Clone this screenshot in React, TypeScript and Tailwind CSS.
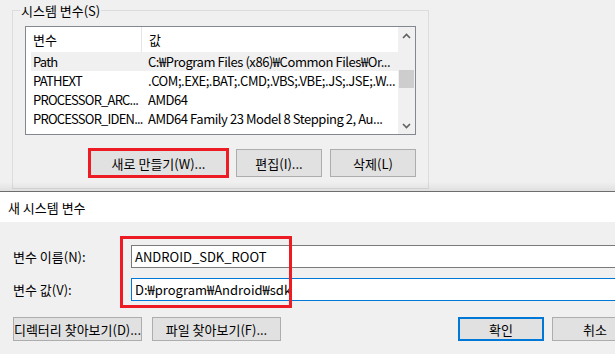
import React from "react";

const FONT = {
  fontFamily: '"Noto Sans CJK KR", "Noto Sans", sans-serif',
};

function ChevronUp() {
  return (
    <svg width="9" height="6" viewBox="0 0 9 6">
      <path d="M1 5 L4.5 1.5 L8 5" fill="none" stroke="#606060" strokeWidth="1.6" />
    </svg>
  );
}
function ChevronDown() {
  return (
    <svg width="9" height="6" viewBox="0 0 9 6">
      <path d="M1 1 L4.5 4.5 L8 1" fill="none" stroke="#606060" strokeWidth="1.6" />
    </svg>
  );
}

const rows: [string, string, boolean][] = [
  ["Path", "C:₩Program Files (x86)₩Common Files₩Or...", true],
  ["PATHEXT", ".COM;.EXE;.BAT;.CMD;.VBS;.VBE;.JS;.JSE;.W...", false],
  ["PROCESSOR_ARC...", "AMD64", false],
  ["PROCESSOR_IDEN...", "AMD64 Family 23 Model 8 Stepping 2, Au...", false],
];

function Btn({ children, w, h, extra = "" }: { children: React.ReactNode; w: string; h: string; extra?: string }) {
  return (
    <div
      className={`${w} ${h} shrink-0 bg-[#e1e1e1] flex items-center justify-center whitespace-nowrap ${extra}`}
    >
      {children}
    </div>
  );
}

export default function App() {
  return (
    <div
      className="relative w-[615px] h-[354px] overflow-hidden bg-[#f0f0f0] text-[13px] leading-none text-black flex flex-col"
      style={FONT}
    >
      {/* Upper window */}
      <div className="relative h-[191px] shrink-0 pt-[10px] pl-[12px]">
        <div className="w-[417px] h-[179px] border border-[#dcdcdc] flex flex-col">
          <div className="self-start ml-[7px] -mt-[10px] -mb-[9px] h-[19px] px-[1px] bg-[#f0f0f0] leading-[19px] whitespace-nowrap">
            시스템 변수(S)
          </div>
          {/* List view */}
          <div className="ml-[12px] mt-[15px] w-[391px] h-[109px] border border-[#828790] bg-white flex">
            <div className="flex-1 flex flex-col overflow-hidden">
              <div className="h-[25px] flex items-center shrink-0">
                <div className="w-[116px] h-full flex items-center pl-[7px] border-r border-[#e5e5e5]">변수</div>
                <div className="pl-[7px]">값</div>
              </div>
              {rows.map(([a, b, sel]) => (
                <div
                  key={a}
                  className={`ml-[5px] h-[19px] shrink-0 flex whitespace-nowrap leading-[19px] ${sel ? "bg-[#f0f0f0]" : ""}`}
                >
                  <div className="w-[111px] shrink-0 pl-[2px] tracking-[-0.8px]">{a}</div>
                  <div className="pl-[6px] overflow-hidden tracking-[-0.45px]">{b}</div>
                </div>
              ))}
            </div>
            <div className="w-[17px] bg-[#f0f0f0] flex flex-col shrink-0">
              <div className="h-[17px] flex items-center justify-center">
                <ChevronUp />
              </div>
              <div className="flex-1 flex flex-col">
                <div className="mt-[26px] mx-[1px] h-[18px] bg-[#cdcdcd]" />
              </div>
              <div className="h-[17px] flex items-center justify-center">
                <ChevronDown />
              </div>
            </div>
          </div>
          {/* Buttons */}
          <div className="flex ml-[76px] mt-[14px] gap-[8px]">
            <div className="relative">
              <Btn w="w-[139px]" h="h-[28px]" extra="border border-[#adadad]">
                새로 만들기(W)...
              </Btn>
              <div className="absolute -left-[1px] -top-[1px] w-[141px] h-[30px] border-[3px] border-[#ed1c24] pointer-events-none" />
            </div>
            <Btn w="w-[86px]" h="h-[28px]" extra="border border-[#adadad]">
              편집(I)...
            </Btn>
            <Btn w="w-[86px]" h="h-[28px]" extra="border border-[#adadad]">
              삭제(L)
            </Btn>
          </div>
        </div>
        <div className="absolute left-0 right-0 bottom-0 h-[9px] bg-gradient-to-b from-[rgba(0,0,0,0)] to-[rgba(0,0,0,0.07)] pointer-events-none" />
      </div>

      {/* Lower dialog */}
      <div className="flex-1 flex flex-col border-t border-[#6d6d6d]">
        <div className="h-[30px] shrink-0 bg-white flex items-center pl-[8px] whitespace-nowrap">새 시스템 변수</div>
        <div className="relative flex-1 flex flex-col pl-[13px]">
          <div className="flex items-center mt-[23px]">
            <div className="w-[118px] shrink-0 whitespace-nowrap">변수 이름(N):</div>
            <div className="w-[500px] h-[23px] shrink-0 bg-white border border-[#7a7a7a] flex items-center pl-[3px] whitespace-nowrap">
              ANDROID_SDK_ROOT
            </div>
          </div>
          <div className="flex items-center mt-[10px]">
            <div className="w-[118px] shrink-0 whitespace-nowrap">변수 값(V):</div>
            <div className="w-[500px] h-[23px] shrink-0 bg-white border border-[#0078d7] flex items-center pl-[3px] whitespace-nowrap">
              D:₩program₩Android₩sdk
              <span className="inline-block w-[1px] h-[16px] bg-black" />
            </div>
          </div>
          <div className="flex mt-[16px]">
            <Btn w="w-[129px]" h="h-[24px]" extra="border border-[#adadad]">
              디렉터리 찾아보기(D)...
            </Btn>
            <Btn w="w-[129px]" h="h-[24px]" extra="border border-[#adadad] ml-[10px]">
              파일 찾아보기(F)...
            </Btn>
            <Btn w="w-[86px]" h="h-[24px]" extra="border-2 border-[#0078d7] ml-[177px]">
              확인
            </Btn>
            <Btn w="w-[86px]" h="h-[24px]" extra="border border-[#adadad] ml-[8px]">
              취소
            </Btn>
          </div>
          <div className="absolute left-[120px] top-[14px] w-[172px] h-[72px] border-[3px] border-[#ed1c24] pointer-events-none" />
        </div>
      </div>
    </div>
  );
}
